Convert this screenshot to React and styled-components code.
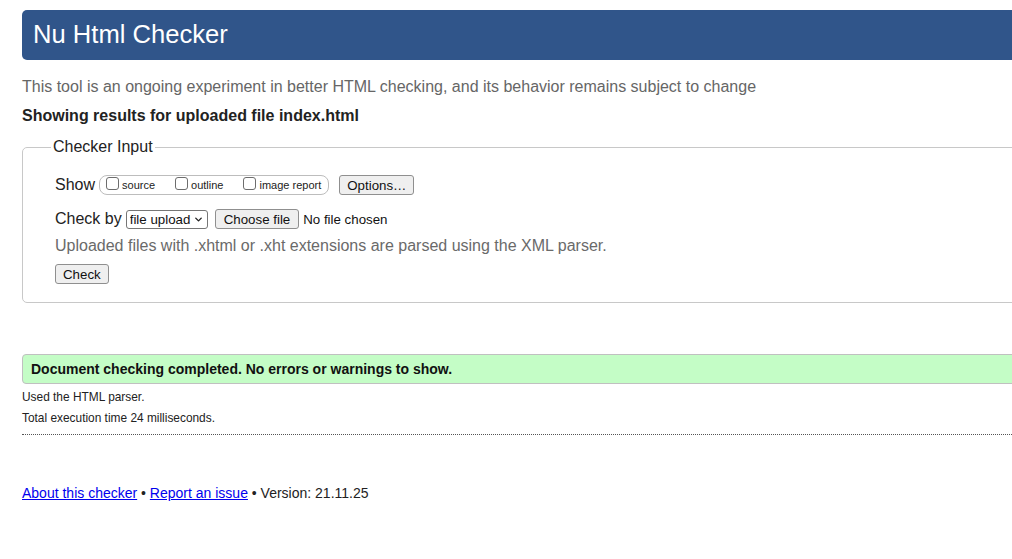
import React from "react";
import styled, { createGlobalStyle } from "styled-components";
import { ChevronDown } from "lucide-react";

const GlobalStyle = createGlobalStyle`
  html, body {
    margin: 0;
    padding: 0;
    overflow: hidden;
    background: #fff;
  }
  body {
    font-family: "Liberation Sans", Arial, sans-serif;
    color: #222;
  }
`;

const Page = styled.div`
  width: 1100px;
  padding: 10px 0 0 22px;
`;

const Header = styled.h1`
  margin: 0;
  height: 50px;
  line-height: 48px;
  padding-left: 11px;
  background: #30558a;
  color: #fff;
  font-size: 25.6px;
  font-weight: normal;
  border-radius: 5px;
`;

const Intro = styled.p`
  margin: 17px 0 0;
  font-size: 16px;
  line-height: 20px;
  color: #666;
`;

const Results = styled.h2`
  margin: 9px 0 0;
  font-size: 16px;
  line-height: 20px;
  font-weight: bold;
  color: #222;
`;

const Fieldset = styled.fieldset`
  margin: 11px 0 0;
  padding: 18px 0 18px 32px;
  border: 1px solid #c8c8c8;
  border-radius: 5px;
  min-inline-size: 0;
`;

const Legend = styled.legend`
  margin-left: -4px;
  padding: 0 2px;
  font-size: 16px;
  line-height: 20px;
  color: #222;
`;

const Row = styled.div`
  display: flex;
  align-items: center;
  height: 20px;
  margin-top: ${(p) => p.$gap || 0}px;
  font-size: 16px;
`;

const Label = styled.span`
  margin-right: 4px;
  color: #222;
`;

const Group = styled.div`
  display: flex;
  align-items: center;
  height: 18px;
  padding: 0 7px 0 6px;
  border: 1px solid #bdbdbd;
  border-radius: 8px;
  gap: 20px;
`;

const Option = styled.label`
  display: flex;
  align-items: center;
  font-size: 11px;
  color: #222;
`;

const Box = styled.input.attrs({ type: "checkbox" })`
  appearance: none;
  margin: 0 3px 0 0;
  width: 13px;
  height: 13px;
  border: 1px solid #6d6d6d;
  border-radius: 3px;
  background: #fff;
  position: relative;
  top: -2px;
`;

const Button = styled.button`
  height: 20px;
  padding: 0 ${(p) => p.$pad || 7}px;
  margin-left: ${(p) => p.$left || 0}px;
  font-family: "Liberation Sans", Arial, sans-serif;
  font-size: 13.3px;
  color: #111;
  background: #efefef;
  border: 1px solid #8f8f8f;
  border-radius: 3px;
`;

const SelectWrap = styled.div`
  position: relative;
  height: 19px;
`;

const Select = styled.select`
  appearance: none;
  height: 19px;
  width: 82px;
  padding: 0 0 0 3px;
  font-family: "Liberation Sans", Arial, sans-serif;
  font-size: 13.3px;
  color: #111;
  background: #fff;
  border: 1px solid #767676;
  border-radius: 3px;
`;

const Chevron = styled(ChevronDown)`
  position: absolute;
  right: 4px;
  top: 4px;
  pointer-events: none;
`;

const FileNote = styled.span`
  margin-left: 4px;
  font-size: 13.3px;
  color: #111;
`;

const Hint = styled.p`
  margin: 7px 0 0;
  font-size: 16px;
  line-height: 20px;
  color: #6a6a6a;
`;

const Success = styled.div`
  margin-top: 51px;
  height: 28px;
  line-height: 28px;
  padding-left: 8px;
  background: #c4fdc6;
  border: 1px solid #c0c0c0;
  border-radius: 4px;
  font-size: 14px;
  font-weight: bold;
  color: #111;
`;

const Detail = styled.p`
  margin: ${(p) => p.$top}px 0 0;
  font-size: 11.9px;
  line-height: 14px;
  color: #222;
`;

const Rule = styled.hr`
  margin: 9px 0 0;
  border: 0;
  border-top: 1px dotted #555;
`;

const Footer = styled.p`
  margin: 49px 0 0;
  font-size: 14px;
  line-height: 18px;
  color: #222;
`;

const Link = styled.a`
  color: #0000ee;
  text-decoration: underline;
`;

export default function App() {
  return (
    <>
      <GlobalStyle />
      <Page>
        <Header>Nu Html Checker</Header>
        <Intro>
          This tool is an ongoing experiment in better HTML checking, and its
          behavior remains subject to change
        </Intro>
        <Results>Showing results for uploaded file index.html</Results>

        <Fieldset>
          <Legend>Checker Input</Legend>
          <Row>
            <Label>Show</Label>
            <Group>
              <Option>
                <Box />
                source
              </Option>
              <Option>
                <Box />
                outline
              </Option>
              <Option>
                <Box />
                image report
              </Option>
            </Group>
            <Button $left={10}>Options…</Button>
          </Row>
          <Row $gap={14}>
            <Label>Check by</Label>
            <SelectWrap>
              <Select defaultValue="file">
                <option value="file">file upload</option>
                <option value="address">address</option>
                <option value="text">text input</option>
              </Select>
              <Chevron size={11} strokeWidth={3} color="#222" />
            </SelectWrap>
            <Button $left={7} $pad={8}>Choose file</Button>
            <FileNote>No file chosen</FileNote>
          </Row>
          <Hint>Uploaded files with .xhtml or .xht extensions are parsed using the XML parser.</Hint>
          <Row $gap={8}>
            <Button>Check</Button>
          </Row>
        </Fieldset>

        <Success>Document checking completed. No errors or warnings to show.</Success>
        <Detail $top={6}>Used the HTML parser.</Detail>
        <Detail $top={7}>Total execution time 24 milliseconds.</Detail>
        <Rule />

        <Footer>
          <Link href="#">About this checker</Link> • <Link href="#">Report an issue</Link> •
          Version: 21.11.25
        </Footer>
      </Page>
    </>
  );
}
